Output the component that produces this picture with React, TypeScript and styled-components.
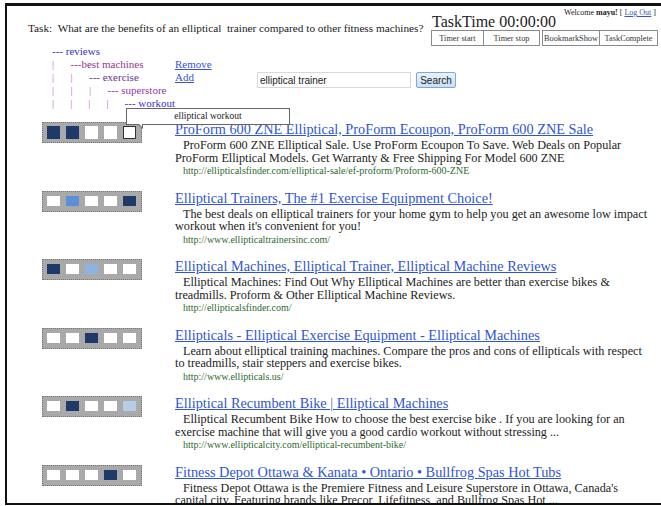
import React from "react";
import styled, { createGlobalStyle } from "styled-components";

const GlobalStyle = createGlobalStyle`
  html, body {
    margin: 0;
    padding: 0;
    background: #fff;
    overflow: hidden;
  }
  body {
    font-family: "Liberation Serif", "Times New Roman", serif;
    color: #222;
  }
`;

const Frame = styled.div`
  margin: 3px 0 0 5px;
  width: 700px;
  height: 502px;
  border-top: 3px solid #111;
  border-left: 2px solid #111;
  border-bottom: 2px solid #111;
  box-sizing: border-box;
  overflow: hidden;
`;

const Header = styled.div`
  display: flex;
  justify-content: space-between;
  align-items: flex-start;
  width: 652px;
  padding-left: 21px;
  box-sizing: border-box;
`;

const TaskText = styled.div`
  font-size: 11.25px;
  line-height: 13px;
  padding-top: 16px;
  white-space: nowrap;
`;

const Panel = styled.div`
  display: flex;
  flex-direction: column;
  width: 228px;
`;

const PanelTop = styled.div`
  display: flex;
  justify-content: space-between;
  align-items: flex-start;
`;

const TaskTime = styled.div`
  font-size: 16px;
  line-height: 16px;
  padding: 8px 0 0 1px;
`;

const Welcome = styled.div`
  font-size: 8px;
  line-height: 10px;
  padding: 2px 3px 0 0;
  color: #222;

  b {
    font-weight: bold;
  }
  a {
    color: #3355cc;
    text-decoration: underline;
  }
`;

const ButtonRow = styled.div`
  display: flex;
  gap: 2px;
`;

const ButtonGroup = styled.div`
  display: flex;
`;

const TimerButton = styled.button<{ $w: number }>`
  width: ${(p) => p.$w}px;
  height: 16px;
  padding: 0;
  font-family: "Liberation Serif", "Times New Roman", serif;
  font-size: 8.3px;
  color: #333;
  background: #fff;
  border: 1px solid #8a8a8a;
  & + & {
    border-left: none;
  }
`;

const Toolbar = styled.div`
  display: flex;
  align-items: flex-start;
  padding: 0 0 0 45px;
  height: 78px;
`;

const Tree = styled.div`
  position: relative;
  width: 123px;
  margin-top: -1px;
  font-size: 11px;
  line-height: 13px;
`;

const Node = styled.div`
  display: flex;
  white-space: nowrap;
`;

const Pipe = styled.span`
  width: 18.5px;
  color: #cc66cc;
`;

const Label = styled.span<{ $color: string }>`
  color: ${(p) => p.$color};
`;

const Links = styled.div`
  display: flex;
  flex-direction: column;
  padding-top: 12px;
  width: 82px;
  font-size: 11px;
  line-height: 13px;

  a {
    color: #3355cc;
    text-decoration: underline;
  }
`;

const SearchForm = styled.form`
  display: flex;
  gap: 5px;
  margin-top: 26px;
`;

const SearchInput = styled.input`
  width: 154px;
  height: 16px;
  box-sizing: border-box;
  padding: 0 2px;
  font-family: "Liberation Sans", Arial, sans-serif;
  font-size: 10px;
  color: #222;
  border: 1px solid #d8d8d8;
  outline: none;
`;

const SearchButton = styled.button`
  width: 40px;
  height: 16px;
  padding: 0;
  font-family: "Liberation Sans", Arial, sans-serif;
  font-size: 10px;
  color: #222;
  background: linear-gradient(#e8f2fb, #c9e0f4);
  border: 1px solid #7fa9d2;
  border-radius: 2px;
`;

const Bubble = styled.div`
  position: absolute;
  left: 74px;
  top: 63px;
  width: 164px;
  height: 17px;
  box-sizing: border-box;
  border: 1px solid #666;
  background: #fff;
  font-size: 9.5px;
  line-height: 15px;
  text-align: center;
  z-index: 2;

  &::before,
  &::after {
    content: "";
    position: absolute;
    left: 10px;
    border-style: solid;
  }
  &::before {
    top: 15px;
    border-width: 5px 0 0 6px;
    border-color: #666 transparent transparent transparent;
  }
  &::after {
    top: 14px;
    left: 11px;
    border-width: 4px 0 0 4px;
    border-color: #fff transparent transparent transparent;
  }
`;

const ResultList = styled.div`
  display: flex;
  flex-direction: column;
  gap: 12.6px;
  padding-left: 35px;
  margin-top: -3px;
`;

const Result = styled.div`
  display: grid;
  grid-template-columns: 100px 476px;
  column-gap: 33px;
  align-items: start;
`;

const Rating = styled.div<{ $tall?: boolean }>`
  display: flex;
  gap: 6px;
  padding: ${(p) => (p.$tall ? "3px 4px 3px" : "4px 4px 5px")};
  margin-top: 1px;
  background: #a9a9a9;
  border: 1px dotted #777;
  box-sizing: border-box;
  width: 100px;
`;

const Cell = styled.span<{ $fill: string; $tall?: boolean; $hover?: boolean }>`
  width: 13px;
  height: ${(p) => (p.$tall ? 13 : 10)}px;
  box-sizing: border-box;
  background: ${(p) => p.$fill};
  border: ${(p) => (p.$hover ? "1.5px solid #333" : "none")};
`;

const Body = styled.div`
  display: flex;
  flex-direction: column;
`;

const Title = styled.a`
  font-size: 14.3px;
  line-height: 17px;
  color: #2f55d4;
  text-decoration: underline;
  white-space: nowrap;
`;

const Snippet = styled.div`
  font-size: 12.2px;
  line-height: 12.5px;
  text-indent: 8px;
  margin-top: 1px;
  color: #222;
`;

const Url = styled.div`
  font-size: 10px;
  line-height: 13px;
  padding-left: 8px;
  color: #2e6a2e;
`;

const NAVY = "#1f3a68";
const MID = "#5b8fd6";
const LIGHT = "#8db3e2";
const PALE = "#b5cde6";
const W = "#fff";

const results = [
  {
    cells: [NAVY, NAVY, W, W, W],
    hover: 4,
    title: "ProForm 600 ZNE Elliptical, ProForm Ecoupon, ProForm 600 ZNE Sale",
    snippet:
      "ProForm 600 ZNE Elliptical Sale. Use ProForm Ecoupon To Save. Web Deals on Popular ProForm Elliptical Models. Get Warranty & Free Shipping For Model 600 ZNE",
    url: "http://ellipticalsfinder.com/elliptical-sale/ef-proform/Proform-600-ZNE",
  },
  {
    cells: [W, MID, W, W, NAVY],
    title: "Elliptical Trainers, The #1 Exercise Equipment Choice!",
    snippet:
      "The best deals on elliptical trainers for your home gym to help you get an awesome low impact workout when it's convenient for you!",
    url: "http://www.ellipticaltrainersinc.com/",
  },
  {
    cells: [NAVY, W, LIGHT, W, W],
    title: "Elliptical Machines, Elliptical Trainer, Elliptical Machine Reviews",
    snippet:
      "Elliptical Machines: Find Out Why Elliptical Machines are better than exercise bikes & treadmills. Proform & Other Elliptical Machine Reviews.",
    url: "http://ellipticalsfinder.com/",
  },
  {
    cells: [W, W, NAVY, W, W],
    title: "Ellipticals - Elliptical Exercise Equipment - Elliptical Machines",
    snippet:
      "Learn about elliptical training machines. Compare the pros and cons of ellipticals with respect to treadmills, stair steppers and exercise bikes.",
    url: "http://www.ellipticals.us/",
  },
  {
    cells: [W, NAVY, W, W, PALE],
    title: "Elliptical Recumbent Bike | Elliptical Machines",
    snippet:
      "Elliptical Recumbent Bike How to choose the best exercise bike . If you are looking for an exercise machine that will give you a good cardio workout without stressing ...",
    url: "http://www.ellipticalcity.com/elliptical-recumbent-bike/",
  },
  {
    cells: [W, W, W, NAVY, W],
    title: "Fitness Depot Ottawa & Kanata \u2022 Ontario \u2022 Bullfrog Spas Hot Tubs",
    snippet:
      "Fitness Depot Ottawa is the Premiere Fitness and Leisure Superstore in Ottawa, Canada's capital city. Featuring brands like Precor, Lifefitness, and Bullfrog Spas Hot ...",
    url: "http://www.fitnessdepotottawa.com/",
  },
];

const tree = [
  { depth: 0, label: "--- reviews", color: "#3333bb" },
  { depth: 1, label: "---best machines", color: "#99338a" },
  { depth: 2, label: "--- exercise", color: "#663399" },
  { depth: 3, label: "--- superstore", color: "#9933aa" },
  { depth: 4, label: "--- workout", color: "#3333cc" },
];

export default function App() {
  return (
    <>
      <GlobalStyle />
      <Frame>
        <Header>
          <TaskText>
            Task:&nbsp; What are the benefits of an elliptical&nbsp; trainer compared to other fitness machines?
          </TaskText>
          <Panel>
            <PanelTop>
              <TaskTime>TaskTime 00:00:00</TaskTime>
              <Welcome>
                Welcome <b>mayu!</b> [ <a href="#">Log Out</a> ]
              </Welcome>
            </PanelTop>
            <ButtonRow>
              <ButtonGroup>
                <TimerButton $w={53}>Timer start</TimerButton>
                <TimerButton $w={56}>Timer stop</TimerButton>
              </ButtonGroup>
              <ButtonGroup>
                <TimerButton $w={58}>BookmarkShow</TimerButton>
                <TimerButton $w={58}>TaskComplete</TimerButton>
              </ButtonGroup>
            </ButtonRow>
          </Panel>
        </Header>

        <Toolbar>
          <Tree>
            {tree.map((n) => (
              <Node key={n.label}>
                {Array.from({ length: n.depth }).map((_, i) => (
                  <Pipe key={i}>|</Pipe>
                ))}
                <Label $color={n.color}>{n.label}</Label>
              </Node>
            ))}
            <Bubble>elliptical workout</Bubble>
          </Tree>
          <Links>
            <a href="#">Remove</a>
            <a href="#">Add</a>
          </Links>
          <SearchForm onSubmit={(e) => e.preventDefault()}>
            <SearchInput defaultValue="elliptical trainer" />
            <SearchButton type="submit">Search</SearchButton>
          </SearchForm>
        </Toolbar>

        <ResultList>
          {results.map((r, idx) => (
            <Result key={idx}>
              <Rating $tall={r.hover !== undefined}>
                {r.cells.map((c, i) => (
                  <Cell
                    key={i}
                    $fill={c}
                    $tall={r.hover !== undefined}
                    $hover={r.hover === i}
                  />
                ))}
              </Rating>
              <Body>
                <Title href="#">{r.title}</Title>
                <Snippet>{r.snippet}</Snippet>
                <Url>{r.url}</Url>
              </Body>
            </Result>
          ))}
        </ResultList>
      </Frame>
    </>
  );
}
